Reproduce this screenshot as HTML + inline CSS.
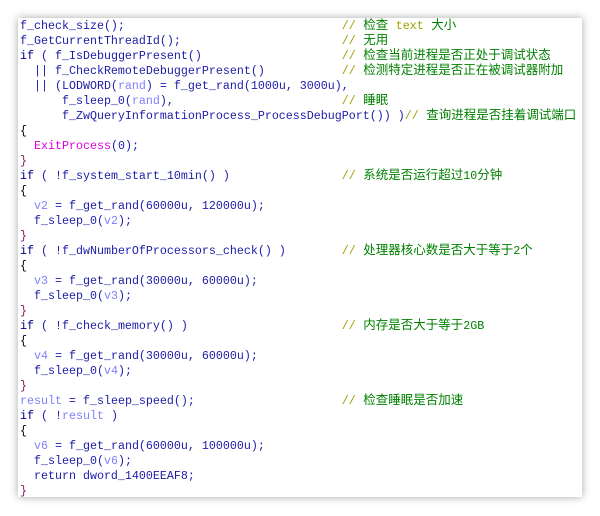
<!DOCTYPE html>
<html><head><meta charset="utf-8"><style>
html,body{margin:0;padding:0;background:#fff;width:600px;height:516px;overflow:hidden}
.p{position:absolute;left:18px;top:18px;width:564px;height:479px;background:#fff;box-shadow:0 0 8px rgba(0,0,0,.35)}
.code{position:absolute;left:20px;top:19px;margin:0;font-family:"Liberation Mono","Noto Sans CJK SC",monospace;font-size:11.67px;color:#1c1ca8}
.code div{height:15px;line-height:15px;overflow:visible;white-space:pre}
.k{color:#000080}.v{color:#8080ff}.c{color:#008000;font-size:12.5px}.s{color:#a0a000;font-size:11.67px}.m{color:#e000e0}.b{color:#80205a}.n{color:#000}
</style></head><body><div class="p"></div>
<div class="code">
<div>f_check_size();                               <span class="c"><span class="s">//</span> 检查 <span class="s">text</span> 大小</span></div>
<div>f_GetCurrentThreadId();                       <span class="c"><span class="s">//</span> 无用</span></div>
<div><span class="k">if</span> ( f_IsDebuggerPresent()                    <span class="c"><span class="s">//</span> 检查当前进程是否正处于调试状态</span></div>
<div>  || f_CheckRemoteDebuggerPresent()           <span class="c"><span class="s">//</span> 检测特定进程是否正在被调试器附加</span></div>
<div>  || (LODWORD(<span class="v">rand</span>) = f_get_rand(1000u, 3000u),</div>
<div>      f_sleep_0(<span class="v">rand</span>),                        <span class="c"><span class="s">//</span> 睡眠</span></div>
<div>      f_ZwQueryInformationProcess_ProcessDebugPort()) )<span class="c"><span class="s">//</span> 查询进程是否挂着调试端口</span></div>
<div><span class="n">{</span></div>
<div>  <span class="m">ExitProcess</span>(0);</div>
<div><span class="b">}</span></div>
<div><span class="k">if</span> ( !f_system_start_10min() )                <span class="c"><span class="s">//</span> 系统是否运行超过<span class="s" style="color:#008000">10</span>分钟</span></div>
<div><span class="n">{</span></div>
<div>  <span class="v">v2</span> = f_get_rand(60000u, 120000u);</div>
<div>  f_sleep_0(<span class="v">v2</span>);</div>
<div><span class="b">}</span></div>
<div><span class="k">if</span> ( !f_dwNumberOfProcessors_check() )        <span class="c"><span class="s">//</span> 处理器核心数是否大于等于<span class="s" style="color:#008000">2</span>个</span></div>
<div><span class="n">{</span></div>
<div>  <span class="v">v3</span> = f_get_rand(30000u, 60000u);</div>
<div>  f_sleep_0(<span class="v">v3</span>);</div>
<div><span class="b">}</span></div>
<div><span class="k">if</span> ( !f_check_memory() )                      <span class="c"><span class="s">//</span> 内存是否大于等于<span class="s" style="color:#008000">2GB</span></span></div>
<div><span class="n">{</span></div>
<div>  <span class="v">v4</span> = f_get_rand(30000u, 60000u);</div>
<div>  f_sleep_0(<span class="v">v4</span>);</div>
<div><span class="b">}</span></div>
<div><span class="v">result</span> = f_sleep_speed();                     <span class="c"><span class="s">//</span> 检查睡眠是否加速</span></div>
<div><span class="k">if</span> ( !<span class="v">result</span> )</div>
<div><span class="n">{</span></div>
<div>  <span class="v">v6</span> = f_get_rand(60000u, 100000u);</div>
<div>  f_sleep_0(<span class="v">v6</span>);</div>
<div>  return dword_1400EEAF8;</div>
<div><span class="b">}</span></div>
</div>
</body></html>
